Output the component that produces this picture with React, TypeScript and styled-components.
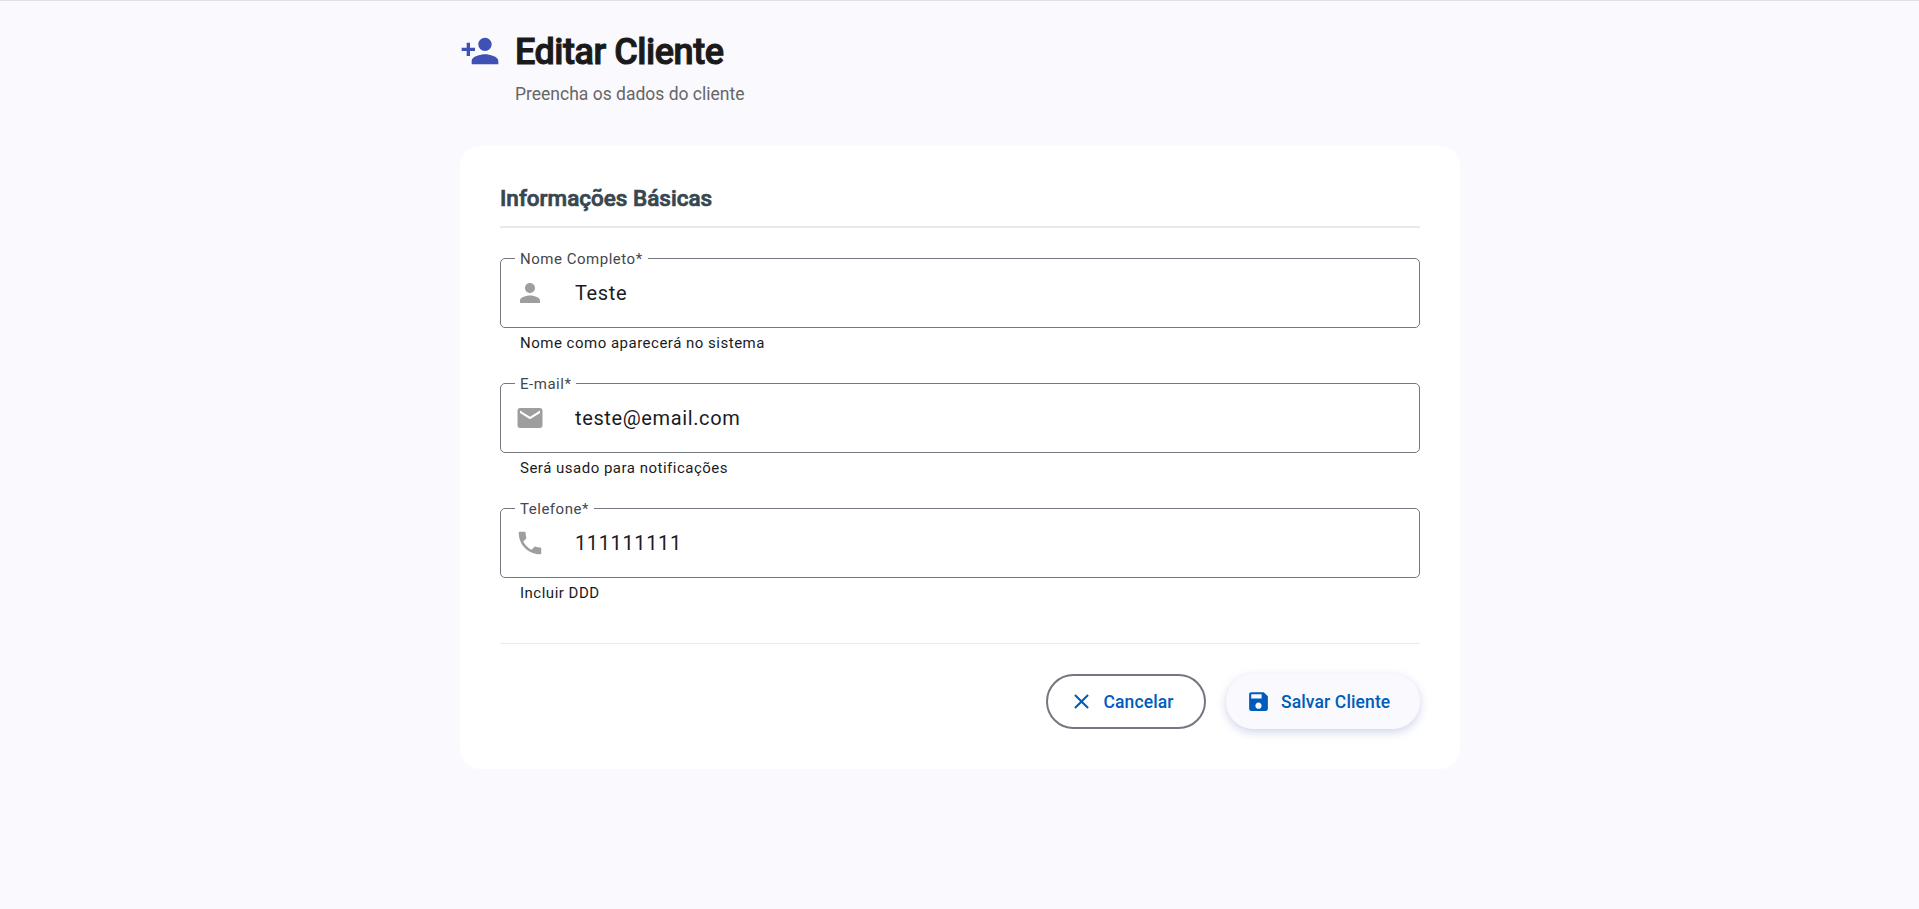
import React from 'react';
import styled, { createGlobalStyle } from 'styled-components';

const GlobalStyle = createGlobalStyle`
  * { box-sizing: border-box; }
  body {
    margin: 0;
    min-height: 100vh;
    background: #faf9fd;
    color: #1a1b1f;
    font-family: Roboto, "Liberation Sans", sans-serif;
  }
`;

const Page = styled.div`
  min-height: 100vh;
  border-top: 1px solid #e0e0e0;
  padding: 30px 0 0 1px;
`;

const Container = styled.main`
  width: 1000px;
  margin: 0 auto;
`;

const Header = styled.header`
  display: grid;
  grid-template-columns: 40px 1fr;
  column-gap: 15px;
  height: 115px;
  align-content: start;
`;

const Title = styled.h1`
  margin: 0;
  padding-top: 1px;
  font-size: 36px;
  font-weight: 500;
  line-height: 40px;
  letter-spacing: -0.46px;
  color: #1a1a1a;
  -webkit-text-stroke: 1px #1a1a1a;
`;

const Subtitle = styled.p`
  grid-column: 2;
  margin: 10px 0 0;
  font-size: 17.5px;
  line-height: 25px;
  color: #666;
`;

const Icon = styled.svg<{ $size: number }>`
  display: block;
  flex: none;
  width: ${(p) => p.$size}px;
  height: ${(p) => p.$size}px;
  fill: currentColor;
`;

const HeaderIcon = styled(Icon)`
  color: #3f51b5;
`;

const ButtonIcon = styled(Icon)`
  margin-bottom: 1px;
`;

const Card = styled.section`
  height: 623px;
  padding: 40px;
  border-radius: 20px;
  background: #fff;
`;

const SectionTitle = styled.h2`
  margin: 0 0 30px;
  height: 42px;
  border-bottom: 2px solid #e8eaf0;
  font-size: 22.5px;
  font-weight: 500;
  line-height: 25px;
  color: #37474f;
  -webkit-text-stroke: 0.7px #37474f;
`;

const Field = styled.div`
  height: 125px;
`;

const Outline = styled.div`
  position: relative;
  display: flex;
  align-items: center;
  height: 70px;
  padding-left: 14px;
  border: 1px solid #74777f;
  border-radius: 5px;
  color: #9e9e9e;
`;

const Label = styled.label`
  position: absolute;
  top: -10px;
  left: 14px;
  padding: 0 5px;
  background: #fff;
  color: #44474e;
  font-size: 15px;
  line-height: 20px;
  letter-spacing: 0.52px;
`;

const Input = styled.input`
  flex: 1;
  margin-left: 30px;
  padding: 0;
  border: 0;
  outline: 0;
  background: transparent;
  color: #1a1b1f;
  font: 400 20px/30px Roboto, "Liberation Sans", sans-serif;
  letter-spacing: 0.62px;
`;

const Hint = styled.div`
  padding: 5px 20px 0;
  font-size: 15px;
  line-height: 20px;
  letter-spacing: 0.5px;
`;

const Actions = styled.footer`
  display: flex;
  justify-content: flex-end;
  gap: 20px;
  margin-top: 10px;
  padding-top: 30px;
  border-top: 1px solid #e8eaed;
`;

const Button = styled.button<{ $raised?: boolean }>`
  display: flex;
  align-items: center;
  gap: 10px;
  width: ${(p) => (p.$raised ? 194 : 160)}px;
  height: 55px;
  padding: 1px 0 0 ${(p) => (p.$raised ? 20 : 20.5)}px;
  border: ${(p) => (p.$raised ? '0' : '2px solid #74777f')};
  border-radius: 28px;
  background: ${(p) => (p.$raised ? '#faf9fd' : 'transparent')};
  box-shadow: ${(p) => (p.$raised ? '0 3px 10px rgba(63, 81, 181, 0.25)' : 'none')};
  color: #005cbb;
  font: 500 17.5px/25px Roboto, "Liberation Sans", sans-serif;
  letter-spacing: 0.12px;
`;

const paths = {
  personAdd:
    'M15 12c2.21 0 4-1.79 4-4s-1.79-4-4-4-4 1.79-4 4 1.79 4 4 4zm-9-2V7H4v3H1v2h3v3h2v-3h3v-2H6zm9 4c-2.67 0-8 1.34-8 4v2h16v-2c0-2.66-5.33-4-8-4z',
  person:
    'M12 12c2.21 0 4-1.79 4-4s-1.79-4-4-4-4 1.79-4 4 1.79 4 4 4zm0 2c-2.67 0-8 1.34-8 4v2h16v-2c0-2.66-5.33-4-8-4z',
  email:
    'M20 4H4c-1.1 0-1.99.9-1.99 2L2 18c0 1.1.9 2 2 2h16c1.1 0 2-.9 2-2V6c0-1.1-.9-2-2-2zm0 4l-8 5-8-5V6l8 5 8-5v2z',
  phone:
    'M6.62 10.79c1.44 2.83 3.76 5.14 6.59 6.59l2.2-2.2c.27-.27.67-.36 1.02-.24 1.12.37 2.33.57 3.57.57.55 0 1 .45 1 1V20c0 .55-.45 1-1 1-9.39 0-17-7.61-17-17 0-.55.45-1 1-1h3.5c.55 0 1 .45 1 1 0 1.25.2 2.45.57 3.57.11.35.03.74-.25 1.02l-2.2 2.2z',
  close:
    'M19 6.41L17.59 5 12 10.59 6.41 5 5 6.41 10.59 12 5 17.59 6.41 19 12 13.41 17.59 19 19 17.59 13.41 12z',
  save:
    'M17 3H5c-1.11 0-2 .9-2 2v14c0 1.1.89 2 2 2h14c1.1 0 2-.9 2-2V7l-4-4zm-5 16c-1.66 0-3-1.34-3-3s1.34-3 3-3 3 1.34 3 3-1.34 3-3 3zm3-10H5V5h10v4z',
};

const fields = [
  { id: 'nome', label: 'Nome Completo*', value: 'Teste', hint: 'Nome como aparecerá no sistema', icon: paths.person },
  { id: 'email', label: 'E-mail*', value: 'teste@email.com', hint: 'Será usado para notificações', icon: paths.email },
  { id: 'telefone', label: 'Telefone*', value: '111111111', hint: 'Incluir DDD', icon: paths.phone },
];

export default function App() {
  return (
    <Page>
      <GlobalStyle />
      <Container>
        <Header>
          <HeaderIcon $size={40} viewBox="0 0 24 24"><path d={paths.personAdd} /></HeaderIcon>
          <Title>Editar Cliente</Title>
          <Subtitle>Preencha os dados do cliente</Subtitle>
        </Header>
        <Card>
          <SectionTitle>Informações Básicas</SectionTitle>
          {fields.map((f) => (
            <Field key={f.id}>
              <Outline>
                <Label htmlFor={f.id}>{f.label}</Label>
                <Icon $size={30} viewBox="0 0 24 24"><path d={f.icon} /></Icon>
                <Input id={f.id} defaultValue={f.value} />
              </Outline>
              <Hint>{f.hint}</Hint>
            </Field>
          ))}
          <Actions>
            <Button type="button">
              <ButtonIcon $size={25} viewBox="0 0 24 24"><path d={paths.close} /></ButtonIcon>
              Cancelar
            </Button>
            <Button type="submit" $raised>
              <ButtonIcon $size={25} viewBox="0 0 24 24"><path d={paths.save} /></ButtonIcon>
              Salvar Cliente
            </Button>
          </Actions>
        </Card>
      </Container>
    </Page>
  );
}
